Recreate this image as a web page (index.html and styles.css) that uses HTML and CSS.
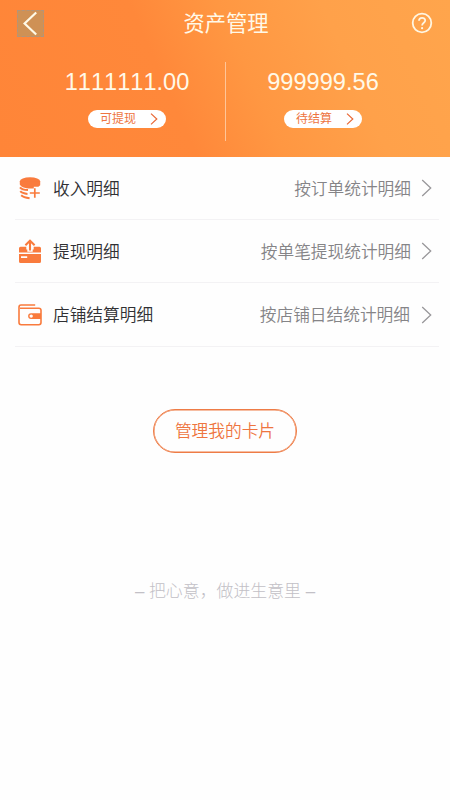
FILE: index.html
```html
<!DOCTYPE html>
<html lang="zh-CN">
<head>
<meta charset="utf-8">
<title>资产管理</title>
<link rel="stylesheet" href="styles.css">
</head>
<body>
<header class="hero">
  <nav class="bar">
    <span class="back"><svg width="27" height="27" viewBox="0 0 27 27"><path d="M19.2 2.5 7.6 13.5 19.2 24.5"/></svg></span>
    <h1>资产管理</h1>
    <svg class="help" width="22" height="22" viewBox="0 0 22 22"><circle cx="11" cy="11" r="9.3"/><path d="M8 8.8C8 4.8 14.2 4.9 14.2 8.6 14.2 10.9 11.1 10.8 11.1 13.6"/><circle class="dot" cx="11.1" cy="16.2" r="1.1"/></svg>
  </nav>
  <div class="totals">
    <section class="total">
      <strong>1111111.00</strong>
      <span class="pill">可提现<svg width="8" height="12" viewBox="0 0 8 12"><path d="M1 .6 6.8 6 1 11.4"/></svg></span>
    </section>
    <section class="total pending">
      <strong>999999.56</strong>
      <span class="pill">待结算<svg width="8" height="12" viewBox="0 0 8 12"><path d="M1 .6 6.8 6 1 11.4"/></svg></span>
    </section>
  </div>
</header>
<main>
  <ul class="list">
    <li class="row">
      <svg class="icon" width="26" height="26" viewBox="0 0 26 26"><ellipse cx="13" cy="6.4" rx="10.2" ry="4.2"/><path d="M2.8 6.4H23.2V10.2L21.4 11.7H16.8V13.6C9.5 13.6 4.2 12.4 2.8 9.4Z"/><path class="line coin" d="M3 12.3C4.4 14.1 7 14.9 11 15.1M3.3 16.2C5 18.2 7.2 18.7 10.5 18.9M4.2 20.2C6.2 22.2 8.8 22.7 12.6 23.2"/><path class="line plus" d="M12.8 18H22.8M17.8 13.2V22.8"/></svg>
      <span class="name">收入明细</span><span class="note">按订单统计明细</span>
      <svg class="arrow" width="11" height="18" viewBox="0 0 11 18"><path d="M1.2 1 9.7 9 1.2 17"/></svg>
    </li>
    <li class="row">
      <svg class="icon" width="26" height="26" viewBox="0 0 26 26"><path d="M3.5 8.8H9.3V11.5H10.3V13.8H15.7V11.5H16.7V8.8H22.5Q24 8.8 24 10.3V14.6H2V10.3Q2 8.8 3.5 8.8Z"/><path fill-rule="evenodd" d="M2 16H24V23.5Q24 25 22.5 25H3.5Q2 25 2 23.5ZM4 18.2V20H10.2V18.2Z"/><path class="line upload" d="M13 12.6V3M8.4 7.2 13 2.8 17.6 7.2"/></svg>
      <span class="name">提现明细</span><span class="note">按单笔提现统计明细</span>
      <svg class="arrow" width="11" height="18" viewBox="0 0 11 18"><path d="M1.2 1 9.7 9 1.2 17"/></svg>
    </li>
    <li class="row">
      <svg class="icon" width="26" height="26" viewBox="0 0 26 26"><path class="line wallet" d="M18.2 3H4Q2 3 2 5.2V20.5Q2 22.7 4.2 22.7H21.8Q24 22.7 24 20.5V8.3Q24 6.2 21.8 6.2H3"/><path fill-rule="evenodd" d="M24 11.2H14A2.9 2.9 0 0 0 14 17H24ZM14.2 12.4A1.7 1.7 0 1 1 14.2 15.8 1.7 1.7 0 0 1 14.2 12.4Z"/></svg>
      <span class="name">店铺结算明细</span><span class="note last">按店铺日结统计明细</span>
      <svg class="arrow" width="11" height="18" viewBox="0 0 11 18"><path d="M1.2 1 9.7 9 1.2 17"/></svg>
    </li>
  </ul>
  <button class="manage">管理我的卡片</button>
  <p class="slogan">– 把心意，做进生意里 –</p>
</main>
</body>
</html>
```
FILE: styles.css
```css
* { box-sizing: border-box; }
body {
  margin: 0;
  height: 800px;
  background: #fefefe;
  font-family: "Liberation Sans", "Noto Sans CJK SC", sans-serif;
}
svg { display: block; flex: none; fill: none; }
.hero {
  height: 157px;
  background: linear-gradient(66deg, #ff8538 0%, #ff883a 38%, #ff9742 55%, #ffa14a 75%, #ffa54c 100%);
  color: #fff9e8;
}
.bar {
  height: 46px;
  padding: 0 17px 0 17px;
  display: grid;
  grid-template-columns: 27px 1fr 22px;
  align-items: center;
}
.back {
  height: 27px;
  background: #cf9155;
  outline: 1px dashed #b2947b;
  outline-offset: -1px;
}
.back svg path { stroke: #fffae8; stroke-width: 2.2; }
.bar h1 {
  margin: 0;
  padding: 2px 3px 0 0;
  font-size: 21.3px;
  line-height: 30px;
  font-weight: 400;
  text-align: center;
}
.help { stroke: #fff6e2; stroke-width: 1.8; }
.help .dot { fill: #fff6e2; stroke: none; }
.totals { display: flex; padding-top: 16px; }
.total {
  width: 226px;
  height: 79px;
  display: flex;
  flex-direction: column;
  align-items: center;
  padding: 7px 0 0 29px;
  border-right: 1px solid #ffc598;
}
.total.pending { width: 224px; padding: 7px 30px 0 0; border: 0; }
.total strong { font-weight: 400; font-size: 23.6px; line-height: 27px; font-kerning: none; }
.pill {
  width: 78px;
  height: 18px;
  margin-top: 14px;
  border-radius: 9px;
  padding: 0 8px 0 12px;
  background: #fff;
  color: #ee7541;
  font-size: 12px;
  line-height: 18px;
  display: flex;
  justify-content: space-between;
  align-items: center;
}
.pill svg { stroke: #e96836; stroke-width: 1.2; }
.list { margin: 0; padding: 0 11px 0 15px; list-style: none; }
.row {
  height: 63px;
  padding: 0 7px 0 2px;
  display: flex;
  align-items: center;
  border-bottom: 1px solid #f3f2f4;
}
.row:nth-child(3) { height: 64px; }
.icon { fill: #f97b3d; }
.icon .line { fill: none; stroke: #f97b3d; stroke-width: 1.6; }
.icon .coin { stroke-width: 2; }
.icon .plus { stroke-width: 1.7; }
.icon .upload { stroke-width: 2.1; }
.name { margin-left: 10px; padding-top: 3px; color: #303033; font-size: 16.7px; line-height: 24px; font-weight: 350; }
.note { margin-left: auto; padding-top: 3px; color: #858487; font-size: 16.7px; line-height: 24px; font-weight: 350; }
.note.last { padding-right: 1px; }
.arrow { margin-left: 10px; stroke: #98979a; stroke-width: 1.3; }
.manage {
  display: block;
  width: 144px;
  height: 44px;
  margin: 62px auto 0 153px;
  padding: 2px 0 0;
  border: 1px solid #ee7c46;
  border-radius: 22px;
  box-shadow: inset 0 0 0 .5px #ee7c46;
  background: transparent;
  color: #ee7540;
  font: 350 16.7px/40px "Liberation Sans", "Noto Sans CJK SC", sans-serif;
}
.slogan {
  margin: 127px 0 0;
  color: #c2c0c6;
  font-size: 16.9px;
  line-height: 24px;
  text-align: center;
  font-weight: 300;
}
```
